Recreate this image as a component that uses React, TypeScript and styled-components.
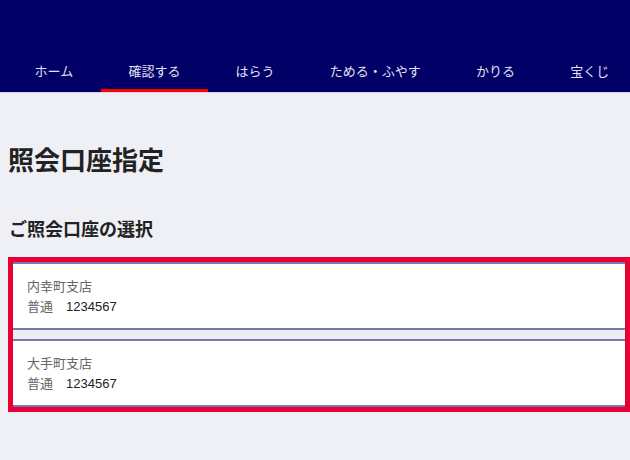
import React from "react";
import styled, { createGlobalStyle } from "styled-components";

const Global = createGlobalStyle`
  html, body { margin: 0; padding: 0; background: #eff0f5; }
  body {
    font-family: "Liberation Sans", "Noto Sans CJK JP", sans-serif;
    overflow: hidden;
  }
  * { box-sizing: border-box; }
`;

const Header = styled.header`
  background: #000066;
  height: 93px;
  padding-top: 48px;
  border-bottom: 1px solid #d6d6e2;
`;

const Nav = styled.nav`
  display: flex;
  padding-left: 7px;
  white-space: nowrap;
`;

const NavItem = styled.a<{ $active?: boolean }>`
  display: flex;
  align-items: center;
  height: 44px;
  padding: 3px 27.6px 0;
  font-size: 13px;
  color: #e2e2f2;
  text-decoration: none;
  border-bottom: 3px solid ${(p) => (p.$active ? "#ff0000" : "transparent")};
  flex-shrink: 0;
`;

const Main = styled.main`
  padding: 0 0 0 8px;
`;

const Title = styled.h1`
  margin: 50px 0 0;
  font-size: 26px;
  line-height: 36px;
  font-weight: 700;
  color: #222;
`;

const SubTitle = styled.h2`
  margin: 38px 0 0;
  font-size: 18px;
  line-height: 26px;
  font-weight: 700;
  color: #222;
  padding-left: 1px;
`;

const AccountList = styled.ul`
  list-style: none;
  margin: 14px 0 0;
  padding: 0;
  border: 5px solid #e60033;
  display: flex;
  flex-direction: column;
  gap: 9px;
  background: #ececf3;
`;

const AccountCard = styled.li`
  background: #fff;
  border-top: 2px solid #7777b2;
  border-bottom: 2px solid #7777b2;
  padding: 13px 14px 11px;
  font-size: 13px;
  line-height: 20px;
`;

const Branch = styled.div`
  color: #666;
`;

const Detail = styled.div`
  display: flex;
  gap: 13px;
`;

const Kind = styled.span`
  color: #666;
`;

const Number = styled.span`
  color: #222;
`;

const navItems = ["ホーム", "確認する", "はらう", "ためる・ふやす", "かりる", "宝くじ"];

const accounts = [
  { branch: "内幸町支店", kind: "普通", number: "1234567" },
  { branch: "大手町支店", kind: "普通", number: "1234567" },
];

export default function App() {
  return (
    <>
      <Global />
      <Header>
        <Nav>
          {navItems.map((n) => (
            <NavItem key={n} $active={n === "確認する"}>
              {n}
            </NavItem>
          ))}
        </Nav>
      </Header>
      <Main>
        <Title>照会口座指定</Title>
        <SubTitle>ご照会口座の選択</SubTitle>
        <AccountList>
          {accounts.map((a) => (
            <AccountCard key={a.branch}>
              <Branch>{a.branch}</Branch>
              <Detail>
                <Kind>{a.kind}</Kind>
                <Number>{a.number}</Number>
              </Detail>
            </AccountCard>
          ))}
        </AccountList>
      </Main>
    </>
  );
}
